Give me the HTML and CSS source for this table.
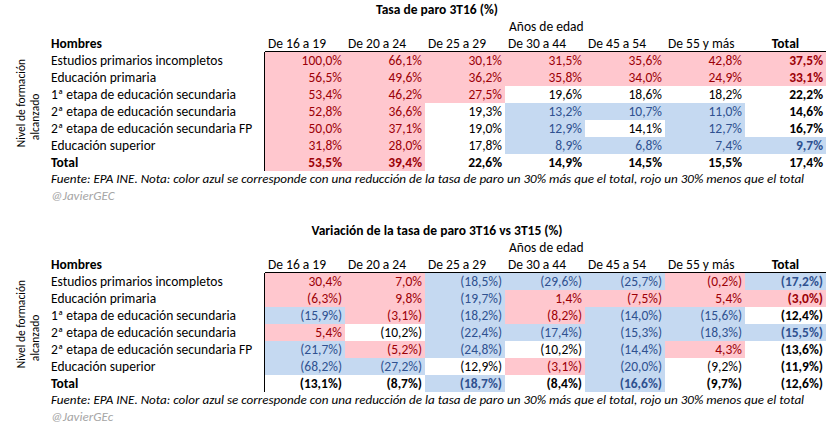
FILE: index.html
```html
<!DOCTYPE html>
<html lang="es">
<head>
<meta charset="utf-8">
<title>Tasa de paro 3T16</title>
<link rel="stylesheet" href="styles.css">
</head>
<body>
<main class="sheet">
  <section class="tbl">
    <div class="title">Tasa de paro 3T16 (%)</div>
    <div class="anos"><span class="anos-txt">Años de edad</span></div>
    <div class="side"><div class="side-text"><span class="l1">Nivel de formación</span><span class="l2">alcanzado</span></div></div>
    <div class="body">
      <div class="rh hb">Hombres</div>
      <div class="ch">De 16 a 19</div><div class="ch">De 20 a 24</div><div class="ch">De 25 a 29</div><div class="ch">De 30 a 44</div><div class="ch">De 45 a 54</div><div class="ch">De 55 y más</div><div class="ch ct">Total</div>

      <div class="rn">Estudios primarios incompletos</div>
      <div class="c p">100,0%</div><div class="c p">66,1%</div><div class="c p">30,1%</div><div class="c p">31,5%</div><div class="c p">35,6%</div><div class="c p">42,8%</div><div class="c p t">37,5%</div>

      <div class="rn">Educación primaria</div>
      <div class="c p">56,5%</div><div class="c p">49,6%</div><div class="c p">36,2%</div><div class="c p">35,8%</div><div class="c p">34,0%</div><div class="c p">24,9%</div><div class="c p t">33,1%</div>

      <div class="rn">1ª etapa de educación secundaria</div>
      <div class="c p">53,4%</div><div class="c p">46,2%</div><div class="c p">27,5%</div><div class="c">19,6%</div><div class="c">18,6%</div><div class="c">18,2%</div><div class="c t">22,2%</div>

      <div class="rn">2ª etapa de educación secundaria</div>
      <div class="c p">52,8%</div><div class="c p">36,6%</div><div class="c">19,3%</div><div class="c b">13,2%</div><div class="c b">10,7%</div><div class="c b">11,0%</div><div class="c t">14,6%</div>

      <div class="rn">2ª etapa de educación secundaria FP</div>
      <div class="c p">50,0%</div><div class="c p">37,1%</div><div class="c">19,0%</div><div class="c b">12,9%</div><div class="c">14,1%</div><div class="c b">12,7%</div><div class="c t">16,7%</div>

      <div class="rn">Educación superior</div>
      <div class="c p">31,8%</div><div class="c p">28,0%</div><div class="c">17,8%</div><div class="c b">8,9%</div><div class="c b">6,8%</div><div class="c b">7,4%</div><div class="c b t">9,7%</div>

      <div class="rn t">Total</div>
      <div class="c p t">53,5%</div><div class="c p t">39,4%</div><div class="c t">22,6%</div><div class="c t">14,9%</div><div class="c t">14,5%</div><div class="c t">15,5%</div><div class="c t">17,4%</div>
    </div>
    <div class="note">Fuente: EPA INE. Nota: color azul se corresponde con una reducción de la tasa de paro un 30% más que el total, rojo un 30% menos que el total</div>
    <div class="handle">@JavierGEC</div>
  </section>

  <section class="tbl second">
    <div class="title">Variación de la tasa de paro 3T16 vs 3T15 (%)</div>
    <div class="anos"><span class="anos-txt">Años de edad</span></div>
    <div class="side"><div class="side-text"><span class="l1">Nivel de formación</span><span class="l2">alcanzado</span></div></div>
    <div class="body">
      <div class="rh hb">Hombres</div>
      <div class="ch">De 16 a 19</div><div class="ch">De 20 a 24</div><div class="ch">De 25 a 29</div><div class="ch">De 30 a 44</div><div class="ch">De 45 a 54</div><div class="ch">De 55 y más</div><div class="ch ct">Total</div>

      <div class="rn">Estudios primarios incompletos</div>
      <div class="c p">30,4%</div><div class="c p">7,0%</div><div class="c b">(18,5%)</div><div class="c b">(29,6%)</div><div class="c b">(25,7%)</div><div class="c p">(0,2%)</div><div class="c b t">(17,2%)</div>

      <div class="rn">Educación primaria</div>
      <div class="c p">(6,3%)</div><div class="c p">9,8%</div><div class="c b">(19,7%)</div><div class="c p">1,4%</div><div class="c p">(7,5%)</div><div class="c p">5,4%</div><div class="c p t">(3,0%)</div>

      <div class="rn">1ª etapa de educación secundaria</div>
      <div class="c b">(15,9%)</div><div class="c p">(3,1%)</div><div class="c b">(18,2%)</div><div class="c p">(8,2%)</div><div class="c b">(14,0%)</div><div class="c b">(15,6%)</div><div class="c t">(12,4%)</div>

      <div class="rn">2ª etapa de educación secundaria</div>
      <div class="c p">5,4%</div><div class="c">(10,2%)</div><div class="c b">(22,4%)</div><div class="c b">(17,4%)</div><div class="c b">(15,3%)</div><div class="c b">(18,3%)</div><div class="c b t">(15,5%)</div>

      <div class="rn">2ª etapa de educación secundaria FP</div>
      <div class="c b">(21,7%)</div><div class="c p">(5,2%)</div><div class="c b">(24,8%)</div><div class="c">(10,2%)</div><div class="c b">(14,4%)</div><div class="c p">4,3%</div><div class="c t">(13,6%)</div>

      <div class="rn">Educación superior</div>
      <div class="c b">(68,2%)</div><div class="c b">(27,2%)</div><div class="c">(12,9%)</div><div class="c p">(3,1%)</div><div class="c b">(20,0%)</div><div class="c">(9,2%)</div><div class="c t">(11,9%)</div>

      <div class="rn t">Total</div>
      <div class="c t">(13,1%)</div><div class="c t">(8,7%)</div><div class="c b t">(18,7%)</div><div class="c t">(8,4%)</div><div class="c b t">(16,6%)</div><div class="c t">(9,7%)</div><div class="c t">(12,6%)</div>
    </div>
    <div class="note">Fuente: EPA INE. Nota: color azul se corresponde con una reducción de la tasa de paro un 30% más que el total, rojo un 30% menos que el total</div>
    <div class="handle">@JavierGEc</div>
  </section>
</main>
</body>
</html>
```

FILE: styles.css
```css
html, body {
  margin: 0;
  padding: 0;
  background: #ffffff;
}

body {
  font-family: "Carlito", "Liberation Sans", sans-serif;
  font-size: 13.5px;
  color: #000000;
  width: 826px;
  height: 426px;
  overflow: hidden;
}

.sheet {
  padding-top: 1px;
  display: flex;
  flex-direction: column;
  gap: 17px;
}

.tbl {
  display: grid;
  grid-template-columns: 48px 778px;
  grid-template-rows: 17px 17px repeat(8, 17px) 17px 17px;
  line-height: 17px;
}

.title {
  grid-column: 2;
  grid-row: 1;
  text-align: center;
  font-weight: bold;
  white-space: nowrap;
}

.anos {
  grid-column: 2;
  grid-row: 2;
  display: grid;
  grid-template-columns: 217px repeat(6, 80px) 81px;
}

.anos-txt {
  grid-column: 5 / 8;
  padding-left: 4px;
  white-space: nowrap;
}

.side {
  grid-column: 1;
  grid-row: 3 / 11;
  display: flex;
  align-items: center;
  justify-content: flex-start;
  padding-left: 15px;
}

.side-text {
  writing-mode: vertical-rl;
  transform: rotate(180deg);
  font-size: 11.5px;
  line-height: 13.5px;
  text-align: center;
  white-space: nowrap;
}

.side-text span {
  display: block;
}

.side-text .l2 {
  padding-inline-end: 28px;
}

.body {
  grid-column: 2;
  grid-row: 3 / 11;
  display: grid;
  grid-template-columns: 217px repeat(6, 80px) 81px;
  grid-auto-rows: 17px;
}

.body > div {
  white-space: nowrap;
  overflow: hidden;
  box-sizing: border-box;
}

.rh,
.rn {
  padding-left: 3px;
}

.rn {
  border-right: 1px solid #000000;
}

.hb {
  font-weight: bold;
}

.ch {
  padding-left: 3px;
  border-bottom: 1px solid #000000;
}

.ct {
  text-align: center;
  padding-left: 0;
  font-weight: bold;
}

.c {
  text-align: right;
  padding-right: 3px;
}

.p {
  background: #ffc7ce;
  color: #9c0006;
}

.b {
  background: #c5d9f1;
  color: #2f5190;
}

.t {
  font-weight: bold;
}

.note {
  grid-column: 2;
  grid-row: 11;
  padding-left: 3px;
  font-size: 13.1px;
  font-style: italic;
  white-space: nowrap;
}

.handle {
  grid-column: 2;
  grid-row: 12;
  padding-left: 3px;
  font-size: 13.1px;
  font-style: italic;
  color: #a6a6a6;
  white-space: nowrap;
}
```
